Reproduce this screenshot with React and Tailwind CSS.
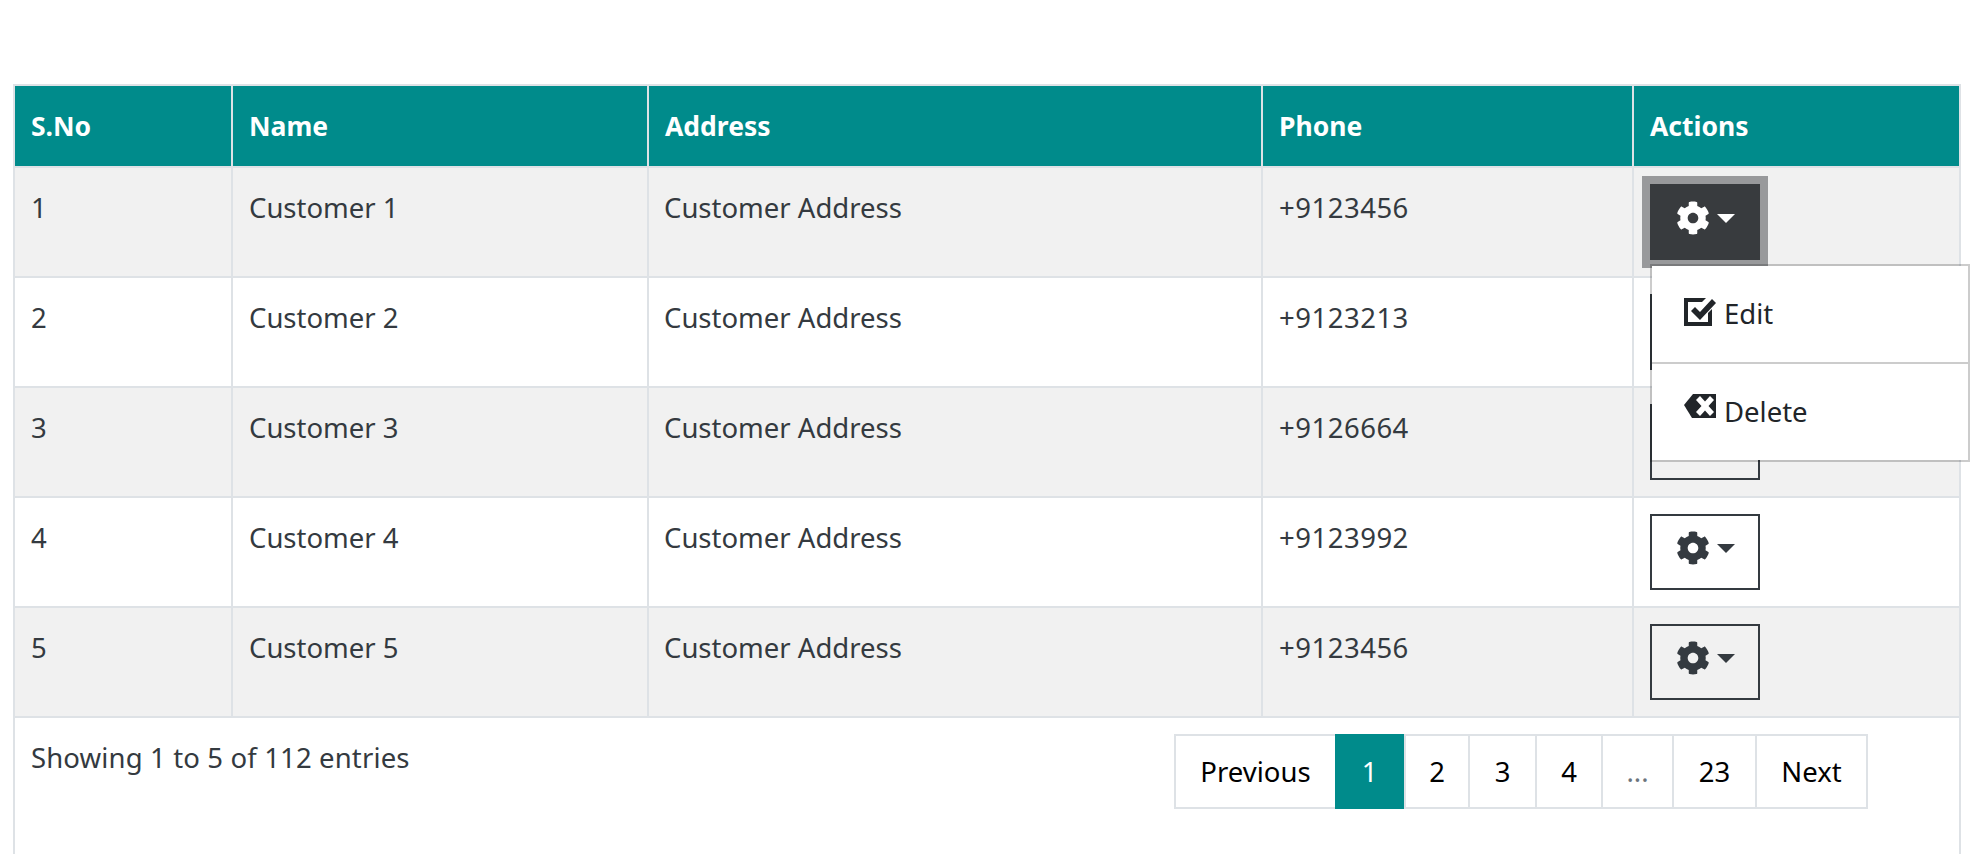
import { FaCog } from "react-icons/fa";

const customers = [
  { id: 1, name: "Customer 1", phone: "+9123456" },
  { id: 2, name: "Customer 2", phone: "+9123213" },
  { id: 3, name: "Customer 3", phone: "+9126664" },
  { id: 4, name: "Customer 4", phone: "+9123992" },
  { id: 5, name: "Customer 5", phone: "+9123456" },
];

const pages = [
  { label: "Previous", width: "w-[159px]" },
  { label: "1", width: "w-[69px]", active: true },
  { label: "2", width: "w-[64px]" },
  { label: "3", width: "w-[67px]" },
  { label: "4", width: "w-[66px]" },
  { label: "...", width: "w-[71px]", muted: true },
  { label: "23", width: "w-[83px]" },
  { label: "Next", width: "w-[111px]" },
];

const Caret = ({ className }) => (
  <svg className={className} width="18" height="9" viewBox="0 0 18 9">
    <polygon points="0,0 18,0 9,9" fill="currentColor" />
  </svg>
);

const CheckIcon = () => (
  <svg width="32" height="28" viewBox="0 0 32 28" className="shrink-0">
    <path d="M0 0H22L18 4H4V24H24V15L28 11V28H0Z" fill="#212529" />
    <path d="M7 13L11 9L16 14L28 1L32 5L16 22Z" fill="#212529" />
  </svg>
);

const BackspaceIcon = () => (
  <svg width="32" height="24" viewBox="0 0 32 24" className="shrink-0">
    <path d="M9 0H32V24H8L0 11Z" fill="#212529" />
    <path d="M12 6L16 2L21 7.500L26 2L30 6L24.500 12L30 18L26 22L21 16.500L16 22L12 18L17.500 12Z" fill="#fff" />
  </svg>
);

const ActionMenu = () => (
  <div className="absolute left-0 top-[80px] z-10 w-[320px] border-2 border-black/20 bg-white bg-clip-padding text-[#212529]">
    <div className="flex h-[96px] items-start pl-[32px] pt-[30px]">
      <span className="mt-[2px]"><CheckIcon /></span>
      <span className="ml-[8px] leading-[36px]">Edit</span>
    </div>
    <div className="h-[2px] bg-[#cccccc]"></div>
    <div className="flex h-[96px] items-start pl-[32px] pt-[30px]">
      <BackspaceIcon />
      <span className="ml-[8px] leading-[36px]">Delete</span>
    </div>
  </div>
);

const ActionButton = ({ open }) => (
  <div className="relative">
    <button
      className={
        open
          ? "flex h-[76px] w-[110px] items-center justify-center gap-[7px] bg-[#383b3e] pb-[8px] text-white outline-[8px] outline-[#98999b]"
          : "flex h-[76px] w-[110px] items-center justify-center gap-[7px] border-2 border-[#343a40] pb-[8px] text-[#343a40]"
      }
    >
      <FaCog size={34} />
      <Caret />
    </button>
    {open && <ActionMenu />}
  </div>
);

const App = () => {
  return (
    <div className="h-[854px] overflow-hidden bg-white pl-[13px] pt-[84px] font-['Noto_Sans',sans-serif] text-[27.5px] text-[#343a40]">
      <div className="flex h-[770px] w-[1948px] flex-col border-x-2 border-[#dee2e6]">
        <table className="-mx-[2px] w-[1948px] table-fixed border-collapse">
          <colgroup>
            <col className="w-[218px]" />
            <col className="w-[416px]" />
            <col className="w-[614px]" />
            <col className="w-[371px]" />
            <col className="w-[327px]" />
          </colgroup>
          <thead>
            <tr className="h-[82px] bg-[#008b8b] text-[26.5px] text-white">
              {["S.No", "Name", "Address", "Phone", "Actions"].map((title) => (
                <th key={title} className="border-2 border-[#dee2e6] px-[16px] pt-[2px] text-left font-bold">
                  {title}
                </th>
              ))}
            </tr>
          </thead>
          <tbody>
            {customers.map((c, i) => (
              <tr key={c.id} className={i % 2 === 0 ? "h-[110px] bg-[#f1f1f1]" : "h-[110px] bg-white"}>
                <td className="border-2 border-[#dee2e6] px-[16px] pb-[46px] pt-[20px] align-top leading-[40px]">{c.id}</td>
                <td className="border-2 border-[#dee2e6] px-[16px] pb-[46px] pt-[20px] align-top leading-[40px]">{c.name}</td>
                <td className="border-2 border-[#dee2e6] px-[15px] pb-[46px] pt-[20px] align-top leading-[40px]">Customer Address</td>
                <td className="border-2 border-[#dee2e6] px-[16px] pb-[46px] pt-[20px] align-top leading-[40px] tracking-[0.5px]">{c.phone}</td>
                <td className="border-2 border-[#dee2e6] px-[16px] py-[16px] align-top">
                  <ActionButton open={i === 0} />
                </td>
              </tr>
            ))}
          </tbody>
        </table>
        <div className="flex pt-[20px]">
          <div className="w-[1159px] pl-[16px] leading-[40px] tracking-[0.14px]">Showing 1 to 5 of 112 entries</div>
          <div className="-mt-[4px] flex h-[75px] border-2 border-[#dee2e6] text-black">
            {pages.map((p, i) => (
              <div
                key={p.label}
                className={
                  (p.active
                    ? "-my-[2px] bg-[#008b8b] text-white "
                    : p.muted
                      ? "border-l-2 border-[#dee2e6] text-[#6c757d] "
                      : i === 0
                        ? ""
                        : "border-l-2 border-[#dee2e6] ") +
                  p.width +
                  " flex items-center justify-center"
                }
              >
                {p.label}
              </div>
            ))}
          </div>
        </div>
      </div>
    </div>
  );
};

export default App;
